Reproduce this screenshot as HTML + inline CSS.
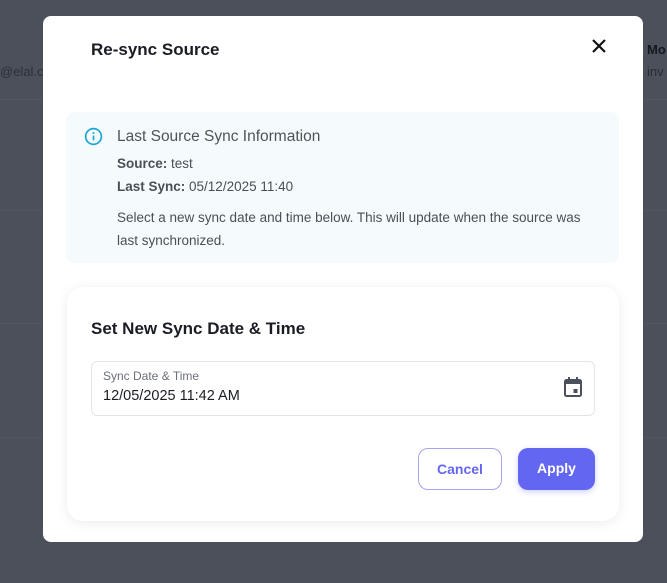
<!DOCTYPE html>
<html><head><style>
*{box-sizing:border-box;margin:0;padding:0}
body{width:667px;height:583px;background:#4b505a;font-family:"Liberation Sans",sans-serif;position:relative;overflow:hidden}
.line{position:absolute;left:0;right:0;height:1px;background:#52565f}
.bgt{position:absolute;color:#2a2d33;font-size:13px}
.modal{position:absolute;left:43px;top:16px;width:600px;height:526px;background:#fff;border-radius:8px}
.title{position:absolute;left:48px;top:24px;font-size:17px;font-weight:bold;color:#1a1d24}
.x{position:absolute;left:548px;top:22px}
.info{position:absolute;left:23px;top:96px;width:553px;height:151px;background:#f5fbfd;border-radius:8px;color:#4a4f57}
.info .h{position:absolute;left:51px;top:16px;font-size:15.5px;color:#4e535b}
.info .r{position:absolute;left:51px;font-size:13.5px}
.info .p{position:absolute;left:51px;top:94px;width:478px;font-size:13.5px;line-height:23px}
.card{position:absolute;left:24px;top:271px;width:552px;height:234px;background:#fff;border-radius:16px;box-shadow:0 2px 12px rgba(0,0,0,.08)}
.card .h{position:absolute;left:24px;top:32px;font-size:17px;font-weight:bold;color:#1a1d24}
.field{position:absolute;left:24px;top:74px;width:504px;height:55px;border:1px solid #e2e4e8;border-radius:6px}
.lab{position:absolute;left:11px;top:7px;font-size:12px;color:#6b7079}
.val{position:absolute;left:11px;top:26px;font-size:14.5px;color:#1a1d24}
.btn{position:absolute;top:161px;height:42px;border-radius:10px;font-size:14px;font-weight:bold;text-align:center;line-height:41px}
.cancel{left:351px;width:84px;border:1px solid #a3a6f3;color:#6366f1}
.apply{left:451px;width:77px;background:#6366f1;color:#fff;box-shadow:0 2px 6px rgba(99,102,241,.3)}
</style></head><body>
<div class="line" style="top:99px"></div>
<div class="line" style="top:210px"></div>
<div class="line" style="top:323px"></div>
<div class="line" style="top:437px"></div>
<div class="bgt" style="left:0;top:64px;color:#2d3038">@elal.c</div>
<div class="bgt" style="left:647px;top:42px;font-weight:bold;color:#15171b">Mo</div>
<div class="bgt" style="left:647px;top:64px">inv</div>
<div class="modal">
<div class="title">Re-sync Source</div>
<svg class="x" width="16" height="16" viewBox="0 0 16 16"><path d="M2 2L14 14M14 2L2 14" stroke="#111" stroke-width="2.2"/></svg>
<div class="info">
<svg style="position:absolute;left:18px;top:15px" width="19" height="19" viewBox="0 0 20 20"><circle cx="10" cy="10" r="8.3" fill="none" stroke="#1aa6d3" stroke-width="1.8"/><path d="M10 9v5" stroke="#1aa6d3" stroke-width="1.8"/><circle cx="10" cy="6.3" r="1.1" fill="#1aa6d3"/></svg>
<div class="h">Last Source Sync Information</div>
<div class="r" style="top:44px"><b>Source:</b> test</div>
<div class="r" style="top:67px"><b>Last Sync:</b> 05/12/2025 11:40</div>
<div class="p">Select a new sync date and time below. This will update when the source was last synchronized.</div>
</div>
<div class="card">
<div class="h">Set New Sync Date &amp; Time</div>
<div class="field"><div class="lab">Sync Date &amp; Time</div><div class="val">12/05/2025 11:42 AM</div>
<svg style="position:absolute;left:471px;top:14px" width="20" height="22" viewBox="0 0 20 22"><rect x="2" y="4" width="16" height="16" rx="1.5" fill="none" stroke="#4b505a" stroke-width="2"/><rect x="2" y="4" width="16" height="4" fill="#4b505a"/><path d="M6 1v4M14 1v4" stroke="#4b505a" stroke-width="2"/><rect x="10.5" y="13" width="4" height="4" fill="#4b505a"/></svg>
</div>
<div class="btn cancel">Cancel</div>
<div class="btn apply">Apply</div>
</div>
</div>
</body></html>
